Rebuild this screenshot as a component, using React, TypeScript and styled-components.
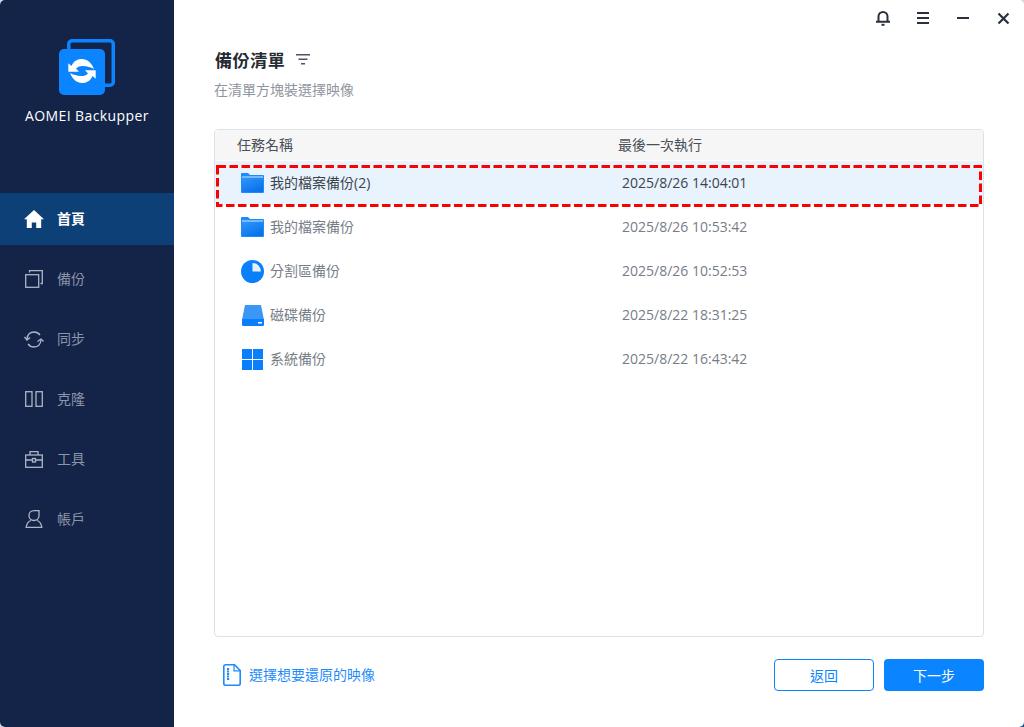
import React from "react";
import styled, { createGlobalStyle } from "styled-components";

const GlobalStyle = createGlobalStyle`
  html, body {
    margin: 0;
    padding: 0;
    background: #fff;
  }
  * {
    box-sizing: border-box;
  }
`;

const fontStack = `"Open Sans", "Noto Sans CJK TC", sans-serif`;

const navItems = [
  { key: "home", label: "首頁" },
  { key: "backup", label: "備份" },
  { key: "sync", label: "同步" },
  { key: "clone", label: "克隆" },
  { key: "tools", label: "工具" },
  { key: "account", label: "帳戶" },
];

const tasks = [
  { kind: "folder", name: "我的檔案備份(2)", time: "2025/8/26 14:04:01" },
  { kind: "folder", name: "我的檔案備份", time: "2025/8/26 10:53:42" },
  { kind: "partition", name: "分割區備份", time: "2025/8/26 10:52:53" },
  { kind: "disk", name: "磁碟備份", time: "2025/8/22 18:31:25" },
  { kind: "system", name: "系統備份", time: "2025/8/22 16:43:42" },
];

const swoosh =
  "M9.300 24.300V32.700H20L17 29.500C19 27.500 21.500 26.800 24 27C28 27.300 32 28.300 35 30C32.500 23.500 28 20 23 20C19 20 15 21.500 12.500 27Z";

const Logo = () => (
  <svg width="56" height="56" viewBox="0 0 56 56">
    <path
      d="M8 10V5a5 5 0 0 1 5-5h38a5 5 0 0 1 5 5v38a5 5 0 0 1-5 5h-5v-3.500h5a1.500 1.500 0 0 0 1.500-1.500V5a1.500 1.500 0 0 0-1.500-1.500H13a1.500 1.500 0 0 0-1.500 1.500v5z"
      fill="#0a84ff"
    />
    <rect x="0" y="10" width="46" height="46" rx="5" fill="#0a84ff" />
    <path d={swoosh} fill="#fff" />
    <path d={swoosh} fill="#fff" transform="rotate(180 23 32)" />
  </svg>
);

const NavIcon = ({ name }: { name: string }) => {
  if (name === "home") {
    return (
      <svg width="20" height="18" viewBox="0 0 20 18">
        <path d="M10 0L0 9.200h2.800V18h5v-5.500h4.400V18h5V9.200H20z" fill="#fff" />
      </svg>
    );
  }
  if (name === "backup") {
    return (
      <svg width="18" height="18" viewBox="0 0 18 18" fill="none" stroke="#aeb6c6" strokeWidth="1.300">
        <rect x="0.700" y="4.700" width="13" height="12.600" />
        <path d="M4.500 2.500V0.700H17.300V13.500H15.500" />
      </svg>
    );
  }
  if (name === "sync") {
    return (
      <svg width="20" height="17" viewBox="0 0 20 17" fill="none" stroke="#aeb6c6" strokeWidth="1.300">
        <path d="M3 8C3.500 3.500 6.500 1 10 1c2.500 0 4.500 1 6 3" />
        <path d="M17 9c-.5 4.500-3.500 7-7 7-2.500 0-4.500-1-6-3" />
        <path d="M0.500 6L3 9l3-2.500M13.500 10.500L17 8l2.500 2.500" />
      </svg>
    );
  }
  if (name === "clone") {
    return (
      <svg width="18" height="16" viewBox="0 0 18 16" fill="none" stroke="#aeb6c6" strokeWidth="1.300">
        <rect x="0.700" y="0.700" width="6.300" height="14.600" />
        <rect x="11" y="0.700" width="6.300" height="14.600" />
      </svg>
    );
  }
  if (name === "tools") {
    return (
      <svg width="18" height="17" viewBox="0 0 18 17" fill="none" stroke="#aeb6c6" strokeWidth="1.300">
        <rect x="0.700" y="4" width="16.600" height="12.300" />
        <path d="M5 4V0.700h8V4M0.700 9h6.800M10.500 9h6.800" />
        <rect x="7.500" y="7.500" width="3" height="3.500" />
      </svg>
    );
  }
  return (
    <svg width="18" height="18" viewBox="0 0 18 18" fill="none" stroke="#aeb6c6" strokeWidth="1.300">
      <path d="M9 .7h5v4.800c0 2.800-2.200 5-5 5s-5-2.200-5-5 2.200-4.800 5-4.800z" />
      <path d="M6 10.500c-3 1-4.300 3-4.800 6.800h15.600c-.5-3.800-1.800-5.800-4.800-6.800" />
    </svg>
  );
};

const TaskIcon = ({ kind }: { kind: string }) => {
  if (kind === "folder") {
    return (
      <svg width="23" height="20" viewBox="0 0 23 20">
        <defs>
          <linearGradient id="folderFill" x1="0" y1="0" x2="0.600" y2="1">
            <stop offset="0" stopColor="#2f97fc" />
            <stop offset="1" stopColor="#0a72ea" />
          </linearGradient>
        </defs>
        <path d="M0 1a1 1 0 0 1 1-1h6l2 2h13a1 1 0 0 1 1 1v16a1 1 0 0 1-1 1H1a1 1 0 0 1-1-1z" fill="#1c8bfb" />
        <rect x="1" y="3.500" width="21" height="1" fill="#d4e9ff" />
        <path d="M1 5h21v14H1z" fill="url(#folderFill)" />
      </svg>
    );
  }
  if (kind === "partition") {
    return (
      <svg width="23" height="23" viewBox="0 0 23 23">
        <circle cx="11.500" cy="11.500" r="11.500" fill="#0a7ffb" />
        <path d="M11.500 3a8.500 8.500 0 0 1 8.500 8.500h-8.500z" fill="#e4effb" />
      </svg>
    );
  }
  if (kind === "disk") {
    return (
      <svg width="22" height="21" viewBox="0 0 22 21">
        <path d="M3 0h16l3 15H0z" fill="#3a97f6" />
        <path d="M0 14h22v5.500a1.500 1.500 0 0 1-1.500 1.500h-19A1.500 1.500 0 0 1 0 19.500z" fill="#0a7ffb" />
        <rect x="16" y="17" width="4" height="1.500" fill="#fff" />
      </svg>
    );
  }
  return (
    <svg width="21" height="21" viewBox="0 0 21 21" fill="#0a7ffb">
      <rect x="0" y="0" width="10" height="10" />
      <rect x="11" y="0" width="10" height="10" />
      <rect x="0" y="11" width="10" height="10" />
      <rect x="11" y="11" width="10" height="10" />
    </svg>
  );
};

const App = () => (
  <>
    <GlobalStyle />
    <Page>
      <Window>
        <Sidebar>
          <Brand>
            <Logo />
            <BrandName>AOMEI Backupper</BrandName>
          </Brand>
          <Nav>
            {navItems.map((item, i) => (
              <NavItem key={item.key} $active={i === 0}>
                <NavGlyph>
                  <NavIcon name={item.key} />
                </NavGlyph>
                <NavLabel>{item.label}</NavLabel>
              </NavItem>
            ))}
          </Nav>
        </Sidebar>
        <Main>
          <TitleBar>
            <BarButton>
              <svg width="16" height="16" viewBox="0 0 16 16" fill="none" stroke="#2a303c" strokeWidth="2">
                <path d="M1 11.800h14M3.500 11.800V6.500a4.500 4.500 0 0 1 9 0v5.300" />
                <path d="M6.500 14.800h3" />
              </svg>
            </BarButton>
            <BarButton>
              <svg width="14" height="12" viewBox="0 0 14 12" fill="#2a303c">
                <rect x="1" y="0" width="12" height="2" />
                <rect x="1" y="5" width="12" height="2" />
                <rect x="1" y="10" width="12" height="2" />
              </svg>
            </BarButton>
            <BarButton>
              <svg width="14" height="2" viewBox="0 0 14 2" fill="#2a303c">
                <rect width="12" height="2" x="1" />
              </svg>
            </BarButton>
            <BarButton>
              <svg width="13" height="13" viewBox="0 0 13 13" fill="none" stroke="#2a303c" strokeWidth="2.200">
                <path d="M1.500 1.500l10 10M11.500 1.500l-10 10" />
              </svg>
            </BarButton>
          </TitleBar>
          <Content>
            <TitleRow>
              <Title>備份清單</Title>
              <svg width="14" height="11" viewBox="0 0 14 11" fill="#4b5360">
                <rect x="0" y="0" width="14" height="1.500" />
                <rect x="2.500" y="4.500" width="9" height="1.500" />
                <rect x="5" y="9" width="4" height="1.500" />
              </svg>
            </TitleRow>
            <Subtitle>在清單方塊裝選擇映像</Subtitle>
            <TaskTable>
              <TableHead>
                <HeadName>任務名稱</HeadName>
                <HeadTime>最後一次執行</HeadTime>
              </TableHead>
              <TaskList>
                {tasks.map((task, i) => (
                  <TaskRow key={task.name} $selected={i === 0}>
                    <TaskGlyph>
                      <TaskIcon kind={task.kind} />
                    </TaskGlyph>
                    <TaskName>{task.name}</TaskName>
                    <TaskTime>{task.time}</TaskTime>
                    {i === 0 && (
                      <DashFrame width="766" height="42" viewBox="0 0 766 42">
                        <rect
                          x="1.500"
                          y="1.500"
                          width="763"
                          height="39"
                          fill="none"
                          stroke="#ff0000"
                          strokeWidth="3"
                          strokeDasharray="8.500 3.500"
                        />
                      </DashFrame>
                    )}
                  </TaskRow>
                ))}
              </TaskList>
            </TaskTable>
            <Footer>
              <PickLink>
                <svg width="18" height="22" viewBox="0 0 18 22" fill="none" stroke="#1c8bfb" strokeWidth="1.600">
                  <path d="M2 .8h9.500L17.200 6.500V19.500a1.700 1.700 0 0 1-1.700 1.700H2.500A1.700 1.700 0 0 1 .8 19.500v-17A1.700 1.700 0 0 1 2.500.8z" />
                  <path d="M11 .8v6h6.200" strokeWidth="1.200" />
                  <path d="M4 5h2.200M6 7.500h-2M4 10h2.200M6 12.500h-2M4 15h2.200" strokeWidth="1.800" />
                </svg>
                <PickLabel>選擇想要還原的映像</PickLabel>
              </PickLink>
              <Actions>
                <OutlineButton>返回</OutlineButton>
                <SolidButton>下一步</SolidButton>
              </Actions>
            </Footer>
          </Content>
        </Main>
      </Window>
    </Page>
  </>
);

const Page = styled.div`
  width: 1024px;
  height: 727px;
  background: linear-gradient(135deg, #d5dae3 98%, #0e4a86 98%);
`;

const Window = styled.div`
  display: flex;
  height: 100%;
  overflow: hidden;
  border-radius: 5px;
  background: #fff;
  font-family: ${fontStack};
`;

const Sidebar = styled.div`
  flex: 0 0 174px;
  display: flex;
  flex-direction: column;
  background: #132448;
`;

const Brand = styled.div`
  display: flex;
  flex-direction: column;
  align-items: center;
  height: 193px;
  padding-top: 39px;
`;

const BrandName = styled.div`
  margin-top: 11px;
  font-size: 14px;
  line-height: 20px;
  letter-spacing: 0.4px;
  color: #fff;
`;

const Nav = styled.nav`
  display: flex;
  flex-direction: column;
  gap: 8px;
`;

const NavItem = styled.div<{ $active?: boolean }>`
  display: flex;
  align-items: center;
  height: 52px;
  padding-left: 24px;
  font-size: 14px;
  font-weight: ${(p) => (p.$active ? 700 : 400)};
  color: ${(p) => (p.$active ? "#fff" : "#8b94a8")};
  background: ${(p) => (p.$active ? "#0e4078" : "transparent")};
`;

const NavGlyph = styled.span`
  display: flex;
  justify-content: center;
  width: 20px;
  margin-right: 13px;
`;

const NavLabel = styled.span`
  margin-bottom: 2px;
`;

const Main = styled.div`
  flex: 1;
  display: flex;
  flex-direction: column;
  min-width: 0;
`;

const TitleBar = styled.div`
  display: flex;
  justify-content: flex-end;
  align-items: center;
  height: 36px;
  padding-right: 1px;
`;

const BarButton = styled.div`
  display: flex;
  justify-content: center;
  align-items: center;
  width: 40px;
  height: 36px;
`;

const Content = styled.div`
  flex: 1;
  display: flex;
  flex-direction: column;
  min-height: 0;
  padding: 11px 40px 36px;
`;

const TitleRow = styled.div`
  display: flex;
  align-items: center;
  gap: 11px;
  height: 24px;
  padding-left: 1px;
`;

const Title = styled.h1`
  margin: 0;
  font-size: 17px;
  font-weight: 700;
  color: #262b33;
  letter-spacing: 0.6px;
`;

const Subtitle = styled.div`
  margin-top: 9px;
  font-size: 14px;
  line-height: 20px;
  color: #8f959e;
`;

const TaskTable = styled.div`
  flex: 1;
  margin-top: 29px;
  border: 1px solid #dfe1e6;
  border-radius: 4px;
  overflow: hidden;
`;

const TableHead = styled.div`
  display: flex;
  align-items: center;
  height: 30px;
  padding-bottom: 3px;
  background: #f6f6f6;
  font-size: 14px;
  color: #4a4f57;
`;

const HeadName = styled.div`
  width: 403px;
  padding-left: 22px;
`;

const HeadTime = styled.div``;

const TaskList = styled.div`
  padding-top: 1px;
`;

const TaskRow = styled.div<{ $selected?: boolean }>`
  position: relative;
  display: flex;
  align-items: center;
  height: 44px;
  background: ${(p) => (p.$selected ? "#e8f3fd" : "transparent")};
  font-size: 14px;
  color: ${(p) => (p.$selected ? "#3d434c" : "#777d87")};
`;

const DashFrame = styled.svg`
  position: absolute;
  left: 1px;
  top: 4px;
`;

const TaskGlyph = styled.span`
  display: flex;
  justify-content: center;
  width: 23px;
  margin-left: 26px;
`;

const TaskName = styled.span`
  width: 352px;
  margin-left: 6px;
  margin-bottom: 2px;
`;

const TaskTime = styled.span`
  margin-bottom: 2px;
`;

const Footer = styled.div`
  display: flex;
  align-items: center;
  justify-content: space-between;
  margin-top: 22px;
`;

const PickLink = styled.div`
  display: flex;
  align-items: center;
  gap: 8px;
  padding-left: 9px;
  font-size: 14px;
  color: #1c8bfb;
`;

const PickLabel = styled.span`
  margin-bottom: 2px;
`;

const Actions = styled.div`
  display: flex;
  gap: 10px;
`;

const OutlineButton = styled.button`
  width: 100px;
  height: 32px;
  border: 1px solid #0a84ff;
  border-radius: 4px;
  background: #fff;
  font: 14px ${fontStack};
  color: #0a84ff;
`;

const SolidButton = styled.button`
  width: 100px;
  height: 32px;
  border: 0;
  border-radius: 4px;
  background: #0a84ff;
  font: 14px ${fontStack};
  color: #fff;
`;

export default App;
